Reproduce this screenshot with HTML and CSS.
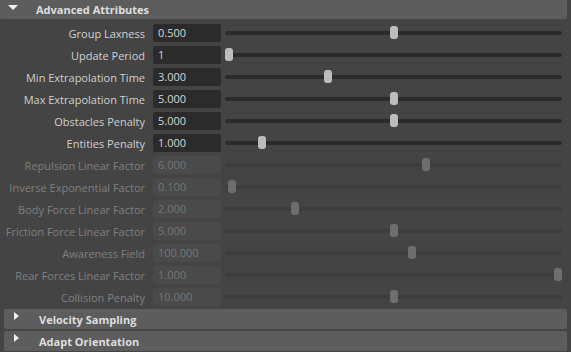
FILE: index.html
```html
<!DOCTYPE html>
<html lang="en">
  <head>
    <meta charset="UTF-8" />
    <title>Advanced Attributes</title>
    <link rel="stylesheet" href="styles.css">
  </head>
  <body>
    <div class="editor">
      <div class="frame-header open">
        <span class="arrow down"></span>
        <span class="frame-title">Advanced Attributes</span>
      </div>

      <div class="frame-body">
        <div class="attr">
          <div class="attr-label"><span>Group Laxness</span></div>
          <div class="attr-field">0.500</div>
          <div class="slider"><span class="handle" style="--v: 0.5"></span></div>
        </div>
        <div class="attr">
          <div class="attr-label"><span>Update Period</span></div>
          <div class="attr-field">1</div>
          <div class="slider"><span class="handle" style="--v: 0"></span></div>
        </div>
        <div class="attr">
          <div class="attr-label"><span>Min Extrapolation Time</span></div>
          <div class="attr-field">3.000</div>
          <div class="slider"><span class="handle" style="--v: 0.3"></span></div>
        </div>
        <div class="attr">
          <div class="attr-label"><span>Max Extrapolation Time</span></div>
          <div class="attr-field">5.000</div>
          <div class="slider"><span class="handle" style="--v: 0.5"></span></div>
        </div>
        <div class="attr">
          <div class="attr-label"><span>Obstacles Penalty</span></div>
          <div class="attr-field">5.000</div>
          <div class="slider"><span class="handle" style="--v: 0.5"></span></div>
        </div>
        <div class="attr">
          <div class="attr-label"><span>Entities Penalty</span></div>
          <div class="attr-field">1.000</div>
          <div class="slider"><span class="handle" style="--v: 0.1"></span></div>
        </div>
        <div class="attr disabled">
          <div class="attr-label"><span>Repulsion Linear Factor</span></div>
          <div class="attr-field">6.000</div>
          <div class="slider"><span class="handle" style="--v: 0.6"></span></div>
        </div>
        <div class="attr disabled">
          <div class="attr-label"><span>Inverse Exponential Factor</span></div>
          <div class="attr-field">0.100</div>
          <div class="slider"><span class="handle" style="--v: 0.01"></span></div>
        </div>
        <div class="attr disabled">
          <div class="attr-label"><span>Body Force Linear Factor</span></div>
          <div class="attr-field">2.000</div>
          <div class="slider"><span class="handle" style="--v: 0.2"></span></div>
        </div>
        <div class="attr disabled">
          <div class="attr-label"><span>Friction Force Linear Factor</span></div>
          <div class="attr-field">5.000</div>
          <div class="slider"><span class="handle" style="--v: 0.5"></span></div>
        </div>
        <div class="attr disabled">
          <div class="attr-label"><span>Awareness Field</span></div>
          <div class="attr-field">100.000</div>
          <div class="slider"><span class="handle" style="--v: 0.555"></span></div>
        </div>
        <div class="attr disabled">
          <div class="attr-label"><span>Rear Forces Linear Factor</span></div>
          <div class="attr-field">1.000</div>
          <div class="slider"><span class="handle" style="--v: 1"></span></div>
        </div>
        <div class="attr disabled">
          <div class="attr-label"><span>Collision Penalty</span></div>
          <div class="attr-field">10.000</div>
          <div class="slider"><span class="handle" style="--v: 0.5"></span></div>
        </div>
      </div>

      <div class="frame-header closed">
        <span class="arrow right"></span>
        <span class="frame-title">Velocity Sampling</span>
      </div>
      <div class="frame-header closed">
        <span class="arrow right"></span>
        <span class="frame-title">Adapt Orientation</span>
      </div>
    </div>
  </body>
</html>
```

FILE: styles.css
```css
html {
  background: #444444;
}

body {
  margin: 0px;
  font-family: "Open Sans", "Noto Sans", sans-serif;
  font-size: 11px;
  color: #d0d0d0;
}

.editor {
  width: 571px;
  height: 352px;
  overflow: hidden;
  display: flex;
  flex-flow: column;
}

.frame-header {
  display: flex;
  align-items: center;
  background-color: #5d5d5d;
  color: #dedede;
  font-weight: bold;

  &.open {
    height: 19px;
    margin-right: 4px;
    border-radius: 0px 0px 2px 2px;
  }

  &.closed {
    height: 20px;
    margin: 1px 4px 1px 4px;
    border-radius: 2px;
  }
}

.arrow {
  width: 0px;
  height: 0px;

  &.down {
    margin: 0px 18px 4px 8px;
    border-left: 5px solid transparent;
    border-right: 5px solid transparent;
    border-top: 5px solid #f0f0f0;
  }

  &.right {
    margin: 0px 20px 6px 10px;
    border-top: 4px solid transparent;
    border-bottom: 4px solid transparent;
    border-left: 5px solid #f0f0f0;
  }
}

.frame-body {
  padding-top: 3px;
}

.attr {
  height: 22px;
  display: flex;
  align-items: center;
}

.attr-label {
  width: 145px;
  flex: none;
  display: flex;
  justify-content: flex-end;
  overflow: hidden;
  white-space: nowrap;
}

.attr-field {
  width: 63px;
  flex: none;
  height: 18px;
  line-height: 18px;
  margin-left: 8px;
  padding-left: 5px;
  border-radius: 2px;
  background-color: #2b2b2b;
  color: #d6d6d6;
}

.slider {
  width: 337px;
  flex: none;
  height: 4px;
  margin-left: 4px;
  position: relative;
  border-radius: 2px;
  background-color: #2b2b2b;
}

.handle {
  position: absolute;
  top: -5px;
  left: calc(var(--v) * (100% - 8px));
  width: 8px;
  height: 13px;
  border-radius: 3px;
  background-color: #bdbdbd;
}

.attr.disabled {
  color: #808080;

  .attr-field {
    background-color: #4a4a4a;
    color: #777777;
  }

  .slider {
    background-color: #3d3d3d;
  }

  .handle {
    background-color: #6e6e6e;
  }
}
```
